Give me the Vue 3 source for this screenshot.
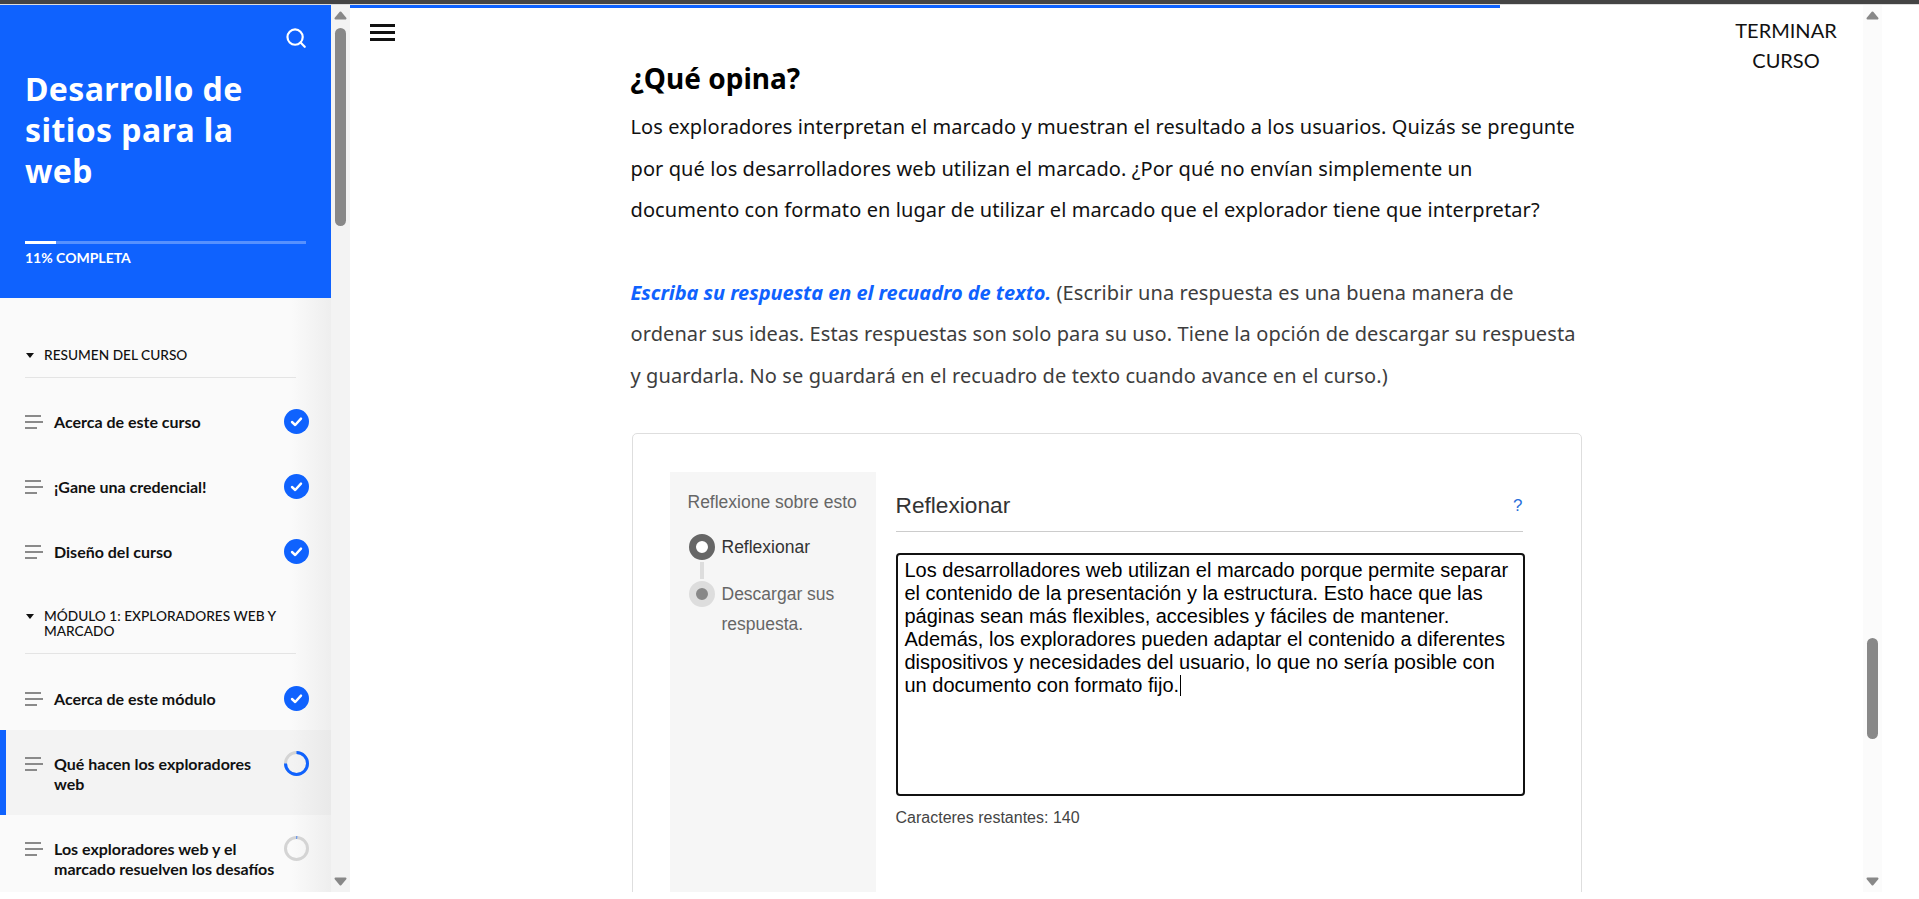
<template>
  <div class="page">
    <div class="topline"></div>
    <div class="shell">
      <aside class="sidebar">
        <div class="sidebar__body">
          <header class="hero">
            <div class="hero__search">
              <svg width="20" height="20" viewBox="0 0 22 22" fill="none" stroke="#fff" stroke-width="2.4" stroke-linecap="round">
                <circle cx="10" cy="10" r="8.4" />
                <path d="M16 16l4.6 4.6" />
              </svg>
            </div>
            <h1 class="hero__title">Desarrollo de sitios para la web</h1>
            <div class="hero__track"><div class="hero__fill" :style="{ width: progress + '%' }"></div></div>
            <div class="hero__label">{{ progress }}% COMPLETA</div>
          </header>

          <nav class="outline">
            <section v-for="section in sections" :key="section.title" class="section">
              <div class="section__head">
                <span class="section__caret"></span>
                <span>{{ section.title }}</span>
              </div>
              <div
                  v-for="item in section.items"
                  :key="item.title"
                  class="item"
                  :class="{ 'item--active': item.state === 'active', 'item--tight': item.tight, 'item--tall': item.tall }"
              >
                <span class="item__lines"><i></i><i></i><i></i></span>
                <span class="item__title">{{ item.title }}</span>
                <span class="item__status">
                  <svg v-if="item.state === 'done'" width="25" height="25" viewBox="0 0 25 25">
                    <circle cx="12.5" cy="12.5" r="12.5" fill="#0f62fe" />
                    <path d="M8 13l3.2 3L17 9.6" fill="none" stroke="#fff" stroke-width="2.4" stroke-linecap="round" stroke-linejoin="round" />
                  </svg>
                  <svg v-else width="25" height="25" viewBox="0 0 25 25" fill="none">
                    <circle cx="12.5" cy="12.5" r="11" stroke="#d4d4d4" stroke-width="3" />
                    <circle
                        cx="12.5"
                        cy="12.5"
                        r="11"
                        stroke="#0f62fe"
                        stroke-width="3"
                        pathLength="100"
                        :stroke-dasharray="`${item.state === 'active' ? 75 : 1} 100`"
                        transform="rotate(-90 12.5 12.5)"
                    />
                  </svg>
                </span>
              </div>
            </section>
          </nav>
        </div>

        <div class="scrollbar scrollbar--side">
          <svg class="arrow" width="13" height="9" viewBox="0 0 13 9"><path d="M6.5 1.5L11.5 7.5H1.5Z" fill="#888" stroke="#888" stroke-width="2" stroke-linejoin="round" /></svg>
          <div class="scrollbar__track"><div class="scrollbar__thumb scrollbar__thumb--side"></div></div>
          <svg class="arrow" width="13" height="9" viewBox="0 0 13 9"><path d="M6.5 7.5L11.5 1.5H1.5Z" fill="#888" stroke="#888" stroke-width="2" stroke-linejoin="round" /></svg>
        </div>
      </aside>

      <main class="main">
        <div class="lesson-bar"></div>
        <div class="toolbar">
          <button class="burger"><i></i><i></i><i></i></button>
          <div class="finish">TERMINAR<br />CURSO</div>
        </div>

        <article class="lesson">
          <h2 class="lesson__heading">¿Qué opina?</h2>
          <p class="lesson__text">
            Los exploradores interpretan el marcado y muestran el resultado a los usuarios. Quizás se pregunte<br />
            por qué los desarrolladores web utilizan el marcado. ¿Por qué no envían simplemente un<br />
            documento con formato en lugar de utilizar el marcado que el explorador tiene que interpretar?
          </p>
          <p class="lesson__text lesson__text--soft">
            <em class="lesson__call">Escriba su respuesta en el recuadro de texto.</em> (Escribir una respuesta es una buena manera de<br />
            ordenar sus ideas. Estas respuestas son solo para su uso. Tiene la opción de descargar su respuesta<br />
            y guardarla. No se guardará en el recuadro de texto cuando avance en el curso.)
          </p>

          <div class="card">
            <div class="steps">
              <div class="steps__title">Reflexione sobre esto</div>
              <div class="step step--current">
                <span class="step__dot"></span>
                <span>Reflexionar</span>
              </div>
              <div class="step__link"></div>
              <div class="step">
                <span class="step__dot step__dot--next"></span>
                <span>Descargar sus<br />respuesta.</span>
              </div>
            </div>

            <div class="reflect">
              <div class="reflect__head">
                <span>Reflexionar</span>
                <span class="reflect__help">?</span>
              </div>
              <div class="answer">{{ answer }}<span class="answer__caret"></span></div>
              <div class="reflect__count">Caracteres restantes: 140</div>
            </div>
          </div>
        </article>
      </main>

      <div class="scrollbar scrollbar--main">
        <svg class="arrow" width="13" height="9" viewBox="0 0 13 9"><path d="M6.5 1.5L11.5 7.5H1.5Z" fill="#888" stroke="#888" stroke-width="2" stroke-linejoin="round" /></svg>
        <div class="scrollbar__track"><div class="scrollbar__thumb scrollbar__thumb--main"></div></div>
        <svg class="arrow" width="13" height="9" viewBox="0 0 13 9"><path d="M6.5 7.5L11.5 1.5H1.5Z" fill="#888" stroke="#888" stroke-width="2" stroke-linejoin="round" /></svg>
      </div>
    </div>
  </div>
</template>

<script setup>
const progress = 11;

const answer = `Los desarrolladores web utilizan el marcado porque permite separar
el contenido de la presentación y la estructura. Esto hace que las
páginas sean más flexibles, accesibles y fáciles de mantener.
Además, los exploradores pueden adaptar el contenido a diferentes
dispositivos y necesidades del usuario, lo que no sería posible con
un documento con formato fijo.`;

const sections = [
  {
    title: "RESUMEN DEL CURSO",
    items: [
      { title: "Acerca de este curso", state: "done" },
      { title: "¡Gane una credencial!", state: "done" },
      { title: "Diseño del curso", state: "done" },
    ],
  },
  {
    title: "MÓDULO 1: EXPLORADORES WEB Y MARCADO",
    items: [
      { title: "Acerca de este módulo", state: "done", tight: true },
      { title: "Qué hacen los exploradores web", state: "active", tall: true },
      { title: "Los exploradores web y el marcado resuelven los desafíos", state: "todo", tall: true },
    ],
  },
];
</script>

<style scoped>
.page {
  height: 892px;
  overflow: hidden;
  background: #fff;
  font-family: "Lato", "Liberation Sans", sans-serif;
}

.topline {
  height: 4px;
  background: #444;
  border-bottom: 1px solid #ddd;
}

.shell {
  display: flex;
  height: 887px;
  padding-right: 37px;
}

.sidebar {
  display: flex;
  flex: none;
  width: 350px;
  height: 887px;
}

.sidebar__body {
  width: 331px;
  height: 887px;
  overflow: hidden;
  background: #fafafa;
}

.hero {
  display: flex;
  flex-direction: column;
  box-sizing: border-box;
  height: 293px;
  padding: 23px 25px 0;
  background: #0f62fe;
  color: #fff;
}

.hero__search {
  display: flex;
  justify-content: flex-end;
  height: 20px;
}

.hero__title {
  max-width: 260px;
  height: 123px;
  margin: 20px 0 0;
  font-family: "Noto Sans", sans-serif;
  font-size: 32px;
  font-weight: 700;
  letter-spacing: 0.4px;
  line-height: 41px;
}

.hero__track {
  height: 3px;
  margin-top: 50px;
  background: rgba(255, 255, 255, 0.3);
}

.hero__fill {
  height: 100%;
  background: #fff;
}

.hero__label {
  margin-top: 6px;
  font-size: 14px;
  font-weight: 700;
  line-height: 16px;
}

.outline {
  background: linear-gradient(to right, #fafafa 88%, #eeeeee 100%);
}

.section__head {
  position: relative;
  margin: 0 35px 13px 25px;
  padding: 23px 0 15px 19px;
  border-bottom: 1px solid #e4e4e4;
  color: #111;
  font-size: 13.7px;
  font-weight: 500;
  line-height: 15px;
}

.section:first-child .section__head {
  margin-bottom: 12px;
  padding-top: 49px;
}

.section__caret {
  position: absolute;
  left: 1px;
  top: 29px;
  border-top: 5px solid #111;
  border-left: 4.5px solid transparent;
  border-right: 4.5px solid transparent;
}

.section:first-child .section__caret {
  top: 55px;
}

.item {
  display: flex;
  align-items: flex-start;
  padding: 22px 22px 23px 25px;
}

.item--tight {
  padding-bottom: 21px;
}

.item--tall {
  padding-top: 24px;
  padding-bottom: 21px;
}

.item--active {
  border-left: 6px solid #0f62fe;
  padding-left: 19px;
  background: linear-gradient(to right, #f3f3f3 88%, #e9e9e9 100%);
}

.item__lines {
  display: flex;
  flex: none;
  flex-direction: column;
  gap: 4px;
  width: 29px;
  padding-top: 3px;
}

.item__lines i {
  display: block;
  width: 16px;
  height: 2px;
  background: #8a8a8a;
}

.item__lines i:nth-child(2) {
  width: 18px;
}

.item__lines i:nth-child(3) {
  width: 12px;
}

.item__title {
  flex: 1;
  color: #111;
  font-size: 16px;
  font-weight: 700;
  line-height: 20px;
}

.item__status {
  flex: none;
  height: 25px;
  margin: -3px 0 -3px 3px;
}

.scrollbar {
  display: flex;
  flex: none;
  flex-direction: column;
  align-items: center;
  width: 19px;
  height: 887px;
  padding: 6px 0;
  box-sizing: border-box;
}

.scrollbar--side {
  background: #f3f3f3;
}

.scrollbar--main {
  background: #fbfbfb;
}

.scrollbar__track {
  flex: 1;
  width: 11px;
}

.scrollbar__thumb {
  width: 11px;
  border-radius: 6px;
  background: #888;
}

.scrollbar__thumb--side {
  height: 198px;
  margin-top: 8px;
}

.scrollbar__thumb--main {
  height: 101px;
  margin-top: 618px;
}

.arrow {
  display: block;
  flex: none;
}

.main {
  flex: 1;
  min-width: 0;
}

.lesson-bar {
  width: 76%;
  height: 3px;
  background: #0f62fe;
}

.toolbar {
  display: flex;
  justify-content: space-between;
  height: 52px;
}

.burger {
  display: flex;
  flex-direction: column;
  gap: 4px;
  width: 25px;
  height: 17px;
  margin: 16px 0 0 20px;
  padding: 0;
  border: none;
  background: none;
}

.burger i {
  display: block;
  flex: none;
  width: 25px;
  height: 3px;
  background: #111;
}

.finish {
  width: 154px;
  height: 60px;
  padding-top: 7px;
  color: #111;
  font-size: 20px;
  line-height: 30px;
  text-align: center;
}

.lesson {
  width: 952px;
  margin: 0 auto;
  font-family: "Noto Sans", sans-serif;
}

.lesson__heading {
  margin: 0 0 10px;
  color: #000;
  font-size: 28px;
  font-weight: 700;
  line-height: 36px;
}

.lesson__text {
  margin: 0 0 41px;
  color: #111;
  font-size: 20px;
  letter-spacing: 0.09px;
  line-height: 41.5px;
  white-space: nowrap;
}

.lesson__text--soft {
  margin-bottom: 37px;
  color: #3d3d3d;
}

.lesson__call {
  color: #0f62fe;
  font-weight: 700;
  letter-spacing: -0.05px;
}

.card {
  display: flex;
  box-sizing: border-box;
  width: 950px;
  height: 600px;
  margin-left: 1px;
  padding: 38px 37px 0;
  border: 1px solid #dedede;
  border-radius: 5px;
  font-family: "Liberation Sans", Arial, sans-serif;
}

.steps {
  flex: none;
  box-sizing: border-box;
  width: 206px;
  padding: 20px 18px;
  background: #f6f6f6;
  color: #666;
  font-size: 17.5px;
}

.steps__title {
  margin-bottom: 20px;
  line-height: 20px;
}

.step {
  display: flex;
  gap: 7px;
  margin-left: 1px;
  line-height: 30px;
}

.step--current {
  color: #333;
}

.step__dot {
  flex: none;
  box-sizing: border-box;
  width: 26px;
  height: 26px;
  margin-top: 2px;
  border: 7px solid #666;
  border-radius: 50%;
  background: #fff;
}

.step__dot--next {
  border-color: #ddd;
  background: #888;
}

.step__link {
  width: 4px;
  height: 17px;
  margin-left: 12px;
  background: #ddd;
}

.reflect {
  flex: 1;
  min-width: 0;
  margin-left: 20px;
}

.reflect__head {
  display: flex;
  align-items: center;
  justify-content: space-between;
  box-sizing: border-box;
  width: 627px;
  height: 60px;
  padding-top: 8px;
  border-bottom: 1px solid #ccc;
  color: #333;
  font-size: 22.7px;
}

.reflect__help {
  color: #2a6fdb;
  font-size: 17px;
}

.answer {
  box-sizing: border-box;
  width: 629px;
  height: 243px;
  margin-top: 21px;
  padding: 4px 7px 5px;
  border: 2px solid #111;
  border-radius: 4px;
  color: #000;
  font-size: 20px;
  line-height: 23px;
  white-space: pre-line;
}

.answer__caret {
  display: inline-block;
  width: 1px;
  height: 21px;
  margin-left: 1px;
  background: #000;
  vertical-align: -4px;
}

.reflect__count {
  margin-top: 13px;
  color: #444;
  font-size: 16px;
  line-height: 18px;
}
</style>

<style>
html,
body {
  background: #fff;
}
</style>
